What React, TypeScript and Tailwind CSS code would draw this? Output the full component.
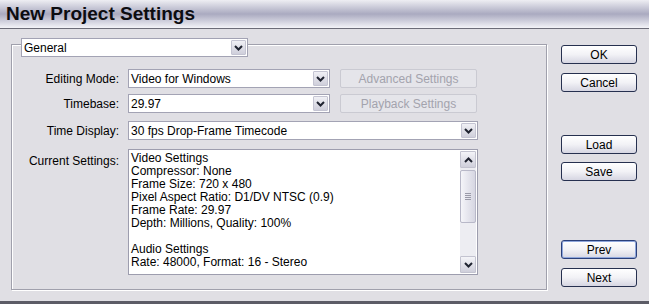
import React from "react";

const font = { fontFamily: '"Liberation Sans", Arial, sans-serif' };

function Chevron({ up = false }: { up?: boolean }) {
    return (
        <svg width="9" height="6" viewBox="0 0 9 6">
            <polyline
                points={up ? "1,5 4.5,1.5 8,5" : "1,1 4.5,4.5 8,1"}
                fill="none"
                stroke="#1f2330"
                strokeWidth="2"
            />
        </svg>
    );
}

function Dropdown({ value, className = "" }: { value: string; className?: string }) {
    return (
        <div className={`flex h-[19px] border border-[#a3a3b4] bg-white ${className}`}>
            <div className="flex-1 pl-[2px] text-[12px] leading-[18px] text-black">{value}</div>
            <div className="m-[1px] flex w-[15px] items-center justify-center rounded-[1px] border border-[#c4c4d2] bg-gradient-to-b from-[#f0f0f5] to-[#cfcfdb]">
                <Chevron />
            </div>
        </div>
    );
}

function DisabledButton({ label }: { label: string }) {
    return (
        <div className="flex h-[19px] w-[137px] items-center justify-center rounded-[2px] border border-[#cacad2] bg-[#e5e5ea] text-[12px] text-[#a3a3ad]">
            {label}
        </div>
    );
}

function Button({ label, primary = false, className = "" }: { label: string; primary?: boolean; className?: string }) {
    return (
        <div
            className={`flex h-[19px] w-[76px] items-center justify-center rounded-[3px] border bg-gradient-to-b from-white via-[#f2f2f6] to-[#d6d6e2] text-[12px] text-black ${
                primary ? "border-[#2a3f7a] shadow-[inset_0_0_0_1px_#8fa7dc]" : "border-[#26304f]"
            } ${className}`}
        >
            {label}
        </div>
    );
}

const settings = [
    "Video Settings",
    "Compressor: None",
    "Frame Size: 720 x 480",
    "Pixel Aspect Ratio: D1/DV NTSC (0.9)",
    "Frame Rate: 29.97",
    "Depth: Millions, Quality: 100%",
    "",
    "Audio Settings",
    "Rate: 48000, Format: 16 - Stereo",
];

export default function App() {
    return (
        <div className="flex h-[304px] w-[649px] flex-col overflow-hidden bg-[#e0dfe4]" style={font}>
            <div className="h-[28px] bg-gradient-to-b from-[#eeeef3] via-[#aaaac0] to-[#f4f4f8] pl-[6px] text-[19px] font-bold leading-[28px] text-[#0c0c10]">
                New Project Settings
            </div>
            <div className="h-px bg-[#6c6c78]" />

            <div className="flex flex-1 border-b-[3px] border-[#5c5c66]">
                {/* left group */}
                <div className="pl-[11px] pt-[15px]">
                    <div className="relative h-[246px] w-[536px] border border-[#a0a0ac] shadow-[1px_1px_0_#ffffff,inset_1px_1px_0_#ffffff]">
                        <Dropdown value="General" className="absolute left-[9px] top-[-7px] w-[227px]" />

                        <div className="flex flex-col pt-[24px]">
                            <div className="flex items-center">
                                <div className="w-[108px] pr-[1px] text-right text-[12px] text-black">Editing Mode:</div>
                                <Dropdown value="Video for Windows" className="ml-[8px] w-[202px]" />
                                <div className="ml-[10px]">
                                    <DisabledButton label="Advanced Settings" />
                                </div>
                            </div>
                            <div className="mt-[6px] flex items-center">
                                <div className="w-[108px] pr-[1px] text-right text-[12px] text-black">Timebase:</div>
                                <Dropdown value="29.97" className="ml-[8px] w-[202px]" />
                                <div className="ml-[10px]">
                                    <DisabledButton label="Playback Settings" />
                                </div>
                            </div>
                            <div className="mt-[8px] flex items-center">
                                <div className="w-[108px] pr-[1px] text-right text-[12px] text-black">Time Display:</div>
                                <Dropdown value="30 fps Drop-Frame Timecode" className="ml-[8px] w-[350px]" />
                            </div>
                            <div className="mt-[9px] flex items-start">
                                <div className="w-[108px] pr-[1px] pt-[3px] text-right text-[12px] text-black">Current Settings:</div>
                                <div className="ml-[8px] flex h-[126px] w-[350px] border border-[#9d9dae] bg-white">
                                    <div className="flex-1 pl-[2px] pt-[2px] text-[12px] leading-[13px] text-black">
                                        {settings.map((s, i) => (
                                            <div key={i} className="h-[13px] whitespace-nowrap">
                                                {s}
                                            </div>
                                        ))}
                                    </div>
                                    <div className="m-[1px] flex w-[16px] flex-col bg-[#ededf2]">
                                        <div className="flex h-[17px] items-center justify-center rounded-[1px] border border-[#c3c3d0] bg-gradient-to-b from-[#f4f4f8] to-[#cfcfdb]">
                                            <Chevron up />
                                        </div>
                                        <div className="mt-[2px] flex h-[53px] items-center justify-center rounded-[2px] border border-[#b8b8c8] bg-gradient-to-r from-[#f5f5f9] to-[#d6d6e2]">
                                            <div className="flex flex-col gap-[1px]">
                                                <div className="h-px w-[6px] bg-[#9a9aa8]" />
                                                <div className="h-px w-[6px] bg-[#9a9aa8]" />
                                                <div className="h-px w-[6px] bg-[#9a9aa8]" />
                                                <div className="h-px w-[6px] bg-[#9a9aa8]" />
                                            </div>
                                        </div>
                                        <div className="flex-1" />
                                        <div className="flex h-[17px] items-center justify-center rounded-[1px] border border-[#c3c3d0] bg-gradient-to-b from-[#f4f4f8] to-[#cfcfdb]">
                                            <Chevron />
                                        </div>
                                    </div>
                                </div>
                            </div>
                        </div>
                    </div>
                </div>

                {/* right buttons */}
                <div className="ml-[14px] flex flex-col pt-[16px]">
                    <Button label="OK" />
                    <Button label="Cancel" className="mt-[9px]" />
                    <Button label="Load" className="mt-[43px]" />
                    <Button label="Save" className="mt-[8px]" />
                    <Button label="Prev" primary className="mt-[59px]" />
                    <Button label="Next" className="mt-[9px]" />
                </div>
            </div>
        </div>
    );
}
